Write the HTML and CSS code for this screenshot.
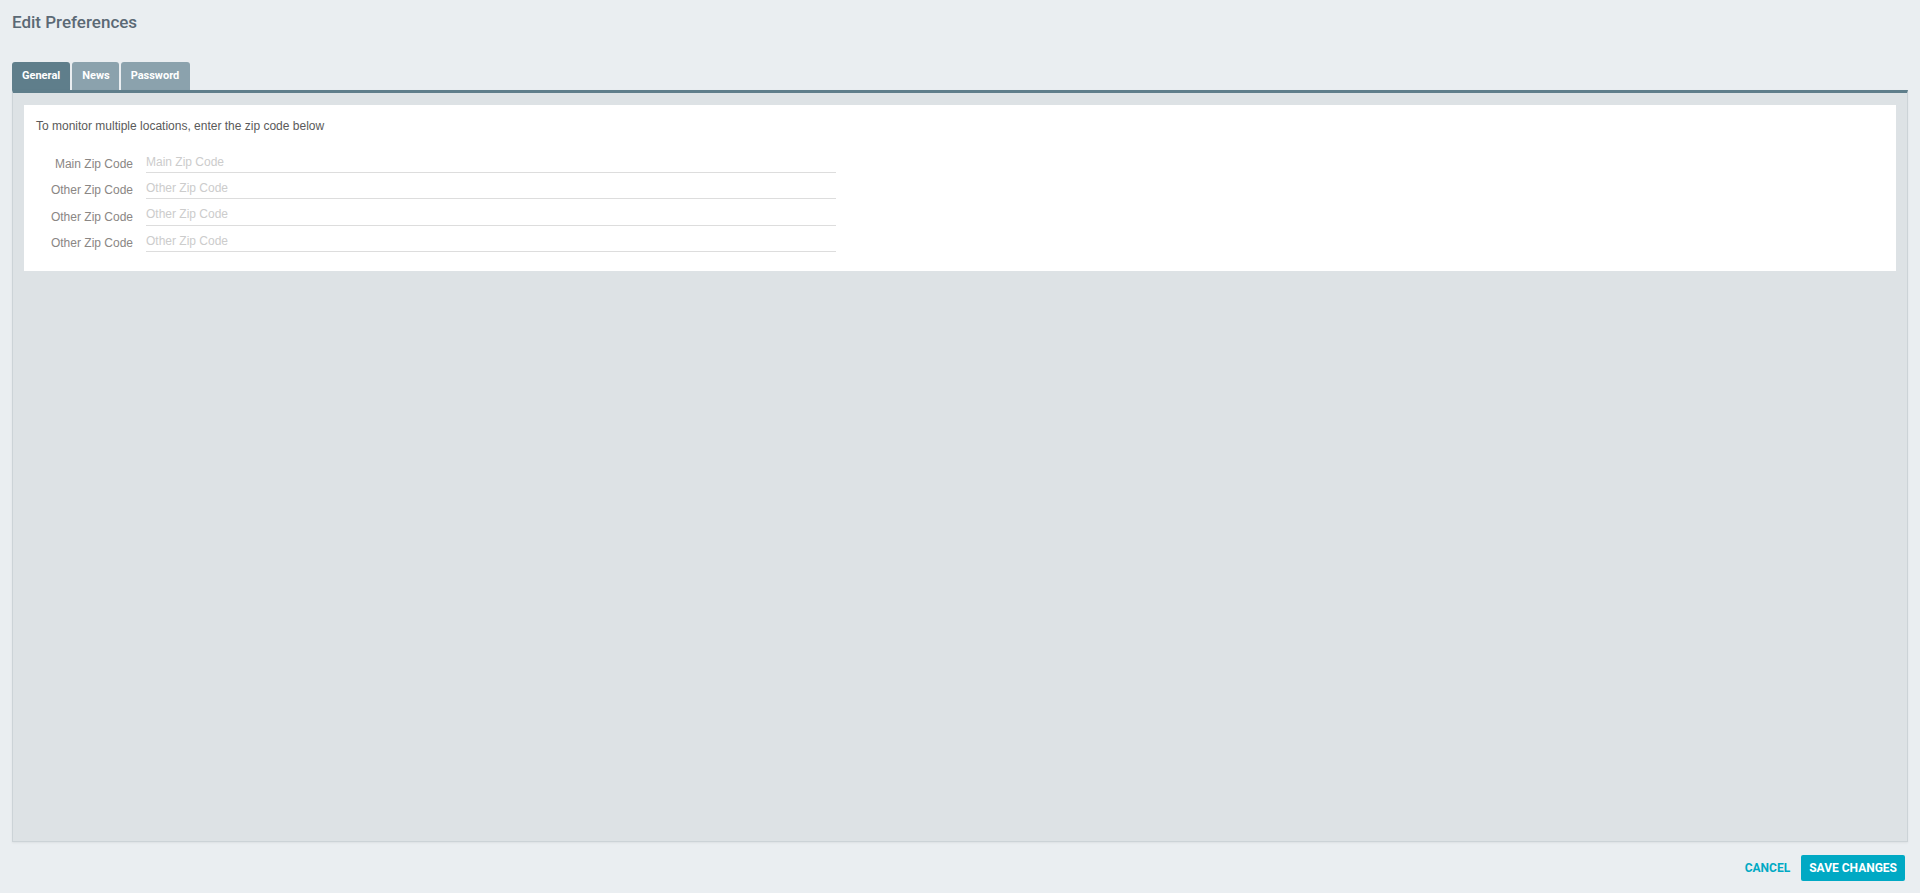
FILE: index.html
```html
<!DOCTYPE html>
<html lang="en">
<head>
<meta charset="utf-8">
<title>Edit Preferences</title>
<link rel="stylesheet" href="styles.css">
</head>
<body>
<div class="page">
  <h1 class="title">Edit Preferences</h1>
  <div class="tabs">
    <div class="tab active">General</div>
    <div class="tab">News</div>
    <div class="tab">Password</div>
  </div>
  <div class="panel">
    <div class="card">
      <p class="intro">To monitor multiple locations, enter the zip code below</p>
      <div class="form">
        <div class="row">
          <label class="label">Main Zip Code</label>
          <input class="input" type="text" placeholder="Main Zip Code">
        </div>
        <div class="row">
          <label class="label">Other Zip Code</label>
          <input class="input" type="text" placeholder="Other Zip Code">
        </div>
        <div class="row">
          <label class="label">Other Zip Code</label>
          <input class="input" type="text" placeholder="Other Zip Code">
        </div>
        <div class="row">
          <label class="label">Other Zip Code</label>
          <input class="input" type="text" placeholder="Other Zip Code">
        </div>
      </div>
    </div>
  </div>
  <div class="footer">
    <button class="btn-cancel" type="button">CANCEL</button>
    <button class="btn-save" type="button">SAVE CHANGES</button>
  </div>
</div>
</body>
</html>
```

FILE: styles.css
```css
html, body {
  margin: 0;
  padding: 0;
  background: #eaeef1;
  font-family: Roboto, "Liberation Sans", Arial, sans-serif;
}

.page {
  height: 893px;
  box-sizing: border-box;
  padding: 12px 12px 0 12px;
  display: flex;
  flex-direction: column;
}

.title {
  margin: 0;
  font-size: 17px;
  line-height: 20px;
  font-weight: 500;
  color: #5b6975;
  height: 20px;
}

.tabs {
  margin-top: 30px;
  display: flex;
  gap: 2px;
  height: 28px;
}

.tab {
  padding: 0 10px;
  line-height: 28px;
  font-size: 11px;
  font-weight: 700;
  color: #ffffff;
  background: #8ba2ad;
  border-radius: 3px 3px 0 0;
}

.tab.active {
  background: #5f7e8b;
}

.tab:nth-child(2) {
  padding: 0 9px 0 10px;
}

.tab:nth-child(3) {
  padding: 0 11px 0 10px;
}

.panel {
  flex: 1;
  background: #dde2e5;
  border-top: 3px solid #5f7e8b;
  border-left: 1px solid #ccd3d7;
  border-right: 1px solid #ccd3d7;
  border-bottom: 1px solid #ccd3d7;
  box-shadow: 0 1px 2px rgba(0, 0, 0, 0.06);
  padding: 12px 11px;
}

.card {
  background: #ffffff;
  padding: 12px 12px 19px 12px;
  font-family: "Liberation Sans", Arial, sans-serif;
}

.intro {
  margin: 0;
  font-size: 12px;
  line-height: 18px;
  color: #5a5a5a;
}

.form {
  margin-top: 11.7px;
  display: flex;
  flex-direction: column;
}

.row {
  display: flex;
  align-items: flex-end;
  height: 26.33px;
}

.label {
  width: 97px;
  padding-right: 13px;
  text-align: right;
  font-size: 12px;
  line-height: 16px;
  color: #8a8684;
  padding-bottom: 1px;
}

.input {
  width: 690px;
  height: 24px;
  box-sizing: border-box;
  border: none;
  border-bottom: 1px solid #dddddd;
  padding: 2px 0 0 0;
  margin: 0;
  font-family: "Liberation Sans", Arial, sans-serif;
  font-size: 12px;
  color: #555555;
  background: transparent;
  outline: none;
}

.input::placeholder {
  color: #cccccc;
}

.footer {
  height: 51px;
  box-sizing: border-box;
  padding: 13px 3px 12px 0;
  display: flex;
  justify-content: flex-end;
  align-items: flex-start;
}

.btn-cancel {
  height: 26px;
  border: none;
  background: transparent;
  color: #00a9c4;
  font-family: Roboto, "Liberation Sans", Arial, sans-serif;
  font-size: 12px;
  font-weight: 700;
  padding: 0 11px 0 0;
  cursor: pointer;
}

.btn-save {
  height: 26px;
  border: none;
  border-radius: 2px;
  background: #00a9c4;
  color: #ffffff;
  font-family: Roboto, "Liberation Sans", Arial, sans-serif;
  font-size: 12px;
  font-weight: 700;
  padding: 0 8px;
  cursor: pointer;
}
```
